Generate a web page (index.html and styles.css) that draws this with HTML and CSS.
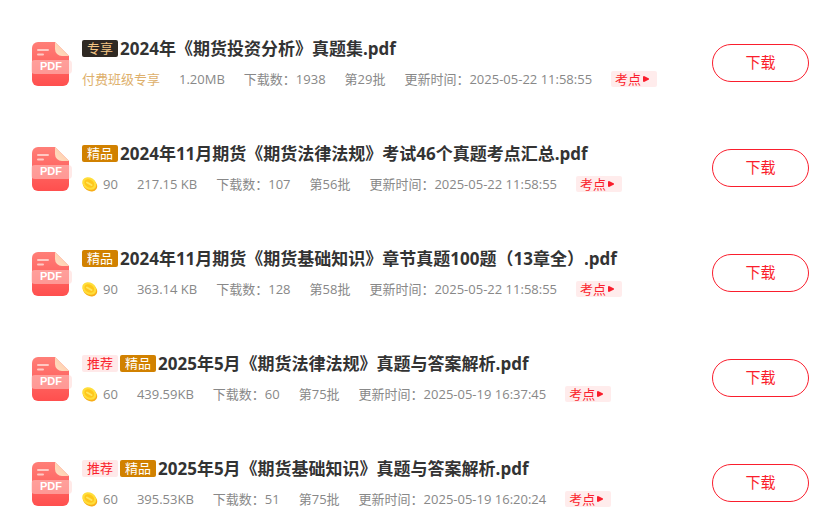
FILE: index.html
```html
<!DOCTYPE html>
<html lang="zh-CN">
<head>
<meta charset="utf-8">
<title>期货真题下载</title>
<link rel="stylesheet" href="styles.css">
</head>
<body>
<svg class="defs" aria-hidden="true">
  <defs>
    <linearGradient id="sheet" x1="0" y1="0" x2="0" y2="1"><stop offset="0" stop-color="#ff7f78"/><stop offset="1" stop-color="#ff4f4e"/></linearGradient>
    <linearGradient id="fold" x1="0" y1="1" x2="1" y2="0"><stop offset="0" stop-color="#ffe0c4"/><stop offset="1" stop-color="#ffc4a0"/></linearGradient>
    <symbol id="pdf" viewBox="0 0 42 44">
      <path d="M7 0H24L38 14V38a6 6 0 0 1-6 6H7a6 6 0 0 1-6-6V6a6 6 0 0 1 6-6Z" fill="url(#sheet)"/>
      <path d="M24 0L38 14H31a7 7 0 0 1-7-7Z" fill="url(#fold)"/>
      <path d="M7 8H17M7 12.500H12" stroke="#ffc9c4" stroke-width="2" stroke-linecap="round"/>
      <rect x="0" y="18" width="41" height="14" rx="4" fill="#ffd3d0" fill-opacity=".5"/>
      <text x="20" y="28" class="pdf-label" textrendering="geometricPrecision">PDF</text>
    </symbol>
    <symbol id="coin" viewBox="0 0 16 16">
      <ellipse cx="8" cy="9" rx="7.600" ry="6" transform="rotate(32 8 9)" fill="#f8ae18"/>
      <ellipse cx="7.300" cy="7.500" rx="7.400" ry="5.900" transform="rotate(32 7.300 7.500)" fill="#ffde3a"/>
      <ellipse cx="7.300" cy="7.500" rx="5.200" ry="3.900" transform="rotate(32 7.300 7.500)" fill="#ffc61c"/>
      <path d="M5 6.500L9.500 9" stroke="#ffe65c" stroke-width="2" stroke-linecap="round"/>
    </symbol>
    <symbol id="play" viewBox="0 0 6 6"><path d="M0 0.500L1 0L6 2.500V3.500L1 6L0 5.500Z" fill="#fa1e2d"/></symbol>
  </defs>
</svg>
<main class="list">
  <article class="item">
    <svg class="file-icon" aria-hidden="true"><use href="#pdf"/></svg>
    <div class="info">
      <h2 class="title"><span class="tag tag-vip">专享</span><span>2024年《期货投资分析》真题集.pdf</span></h2>
      <div class="meta"><span class="vip">付费班级专享</span><span>1.20MB</span><span>下载数：1938</span><span>第29批</span><span>更新时间：2025-05-22 11:58:55</span><a class="point" href="#">考点<svg aria-hidden="true"><use href="#play"/></svg></a></div>
    </div>
    <button class="download" type="button">下载</button>
  </article>
  <article class="item">
    <svg class="file-icon" aria-hidden="true"><use href="#pdf"/></svg>
    <div class="info">
      <h2 class="title"><span class="tag tag-fine">精品</span><span>2024年11月期货《期货法律法规》考试46个真题考点汇总.pdf</span></h2>
      <div class="meta"><span class="price"><svg aria-hidden="true"><use href="#coin"/></svg>90</span><span>217.15 KB</span><span>下载数：107</span><span>第56批</span><span>更新时间：2025-05-22 11:58:55</span><a class="point" href="#">考点<svg aria-hidden="true"><use href="#play"/></svg></a></div>
    </div>
    <button class="download" type="button">下载</button>
  </article>
  <article class="item">
    <svg class="file-icon" aria-hidden="true"><use href="#pdf"/></svg>
    <div class="info">
      <h2 class="title"><span class="tag tag-fine">精品</span><span>2024年11月期货《期货基础知识》章节真题100题（13章全）.pdf</span></h2>
      <div class="meta"><span class="price"><svg aria-hidden="true"><use href="#coin"/></svg>90</span><span>363.14 KB</span><span>下载数：128</span><span>第58批</span><span>更新时间：2025-05-22 11:58:55</span><a class="point" href="#">考点<svg aria-hidden="true"><use href="#play"/></svg></a></div>
    </div>
    <button class="download" type="button">下载</button>
  </article>
  <article class="item">
    <svg class="file-icon" aria-hidden="true"><use href="#pdf"/></svg>
    <div class="info">
      <h2 class="title"><span class="tag tag-hot">推荐</span><span class="tag tag-fine">精品</span><span>2025年5月《期货法律法规》真题与答案解析.pdf</span></h2>
      <div class="meta"><span class="price"><svg aria-hidden="true"><use href="#coin"/></svg>60</span><span>439.59KB</span><span>下载数：60</span><span>第75批</span><span>更新时间：2025-05-19 16:37:45</span><a class="point" href="#">考点<svg aria-hidden="true"><use href="#play"/></svg></a></div>
    </div>
    <button class="download" type="button">下载</button>
  </article>
  <article class="item">
    <svg class="file-icon" aria-hidden="true"><use href="#pdf"/></svg>
    <div class="info">
      <h2 class="title"><span class="tag tag-hot">推荐</span><span class="tag tag-fine">精品</span><span>2025年5月《期货基础知识》真题与答案解析.pdf</span></h2>
      <div class="meta"><span class="price"><svg aria-hidden="true"><use href="#coin"/></svg>60</span><span>395.53KB</span><span>下载数：51</span><span>第75批</span><span>更新时间：2025-05-19 16:20:24</span><a class="point" href="#">考点<svg aria-hidden="true"><use href="#play"/></svg></a></div>
    </div>
    <button class="download" type="button">下载</button>
  </article>
</main>
</body>
</html>
```
FILE: styles.css
```css
* { box-sizing: border-box; }

body {
  margin: 0;
  background: #fff;
  font-family: "Open Sans", "Noto Sans CJK SC", sans-serif;
}

.defs { position: absolute; width: 0; height: 0; }

.list {
  display: flex;
  flex-direction: column;
  gap: 58px;
  padding: 40px 15px 0 31px;
}

.item {
  display: flex;
  align-items: flex-start;
}

.file-icon {
  flex: none;
  width: 42px;
  height: 44px;
  margin: 2px 9px 0 0;
}

.pdf-label {
  fill: #fff;
  font: bold 11px "Liberation Sans", sans-serif;
  text-anchor: middle;
}

.info {
  flex: 1;
  min-width: 0;
}

.title {
  display: flex;
  align-items: center;
  gap: 2px;
  margin: 0 0 14px;
  color: #333;
  font-size: 17px;
  line-height: 17px;
  white-space: nowrap;
}

.tag {
  flex: none;
  width: 36px;
  border-radius: 2px;
  font-size: 13px;
  font-weight: 400;
  text-align: center;
}

.tag-vip { background: #2f2923; color: #f3c583; }
.tag-fine { background: #d18100; color: #fff; }
.tag-hot { background: #ffe9e9; color: #fa1e2d; }

.meta {
  display: flex;
  align-items: center;
  gap: 19px;
  color: #888;
  font-size: 13px;
  line-height: 16px;
  white-space: nowrap;
}

.vip { color: #deb06c; }

.price {
  display: flex;
  align-items: center;
  gap: 5px;
}

.price svg {
  width: 16px;
  height: 16px;
}

.point {
  display: flex;
  align-items: center;
  gap: 2px;
  width: 46px;
  padding-left: 4px;
  border-radius: 2px;
  background: #ffecec;
  color: #fa1e2d;
  text-decoration: none;
}

.point svg {
  width: 6px;
  height: 6px;
}

.download {
  flex: none;
  width: 97px;
  height: 38px;
  margin-top: 4px;
  padding: 0 0 4px;
  border: 1px solid #fa1e2d;
  border-radius: 19px;
  background: #fff;
  color: #fa1e2d;
  font-family: inherit;
  font-size: 15px;
  cursor: pointer;
}
```
